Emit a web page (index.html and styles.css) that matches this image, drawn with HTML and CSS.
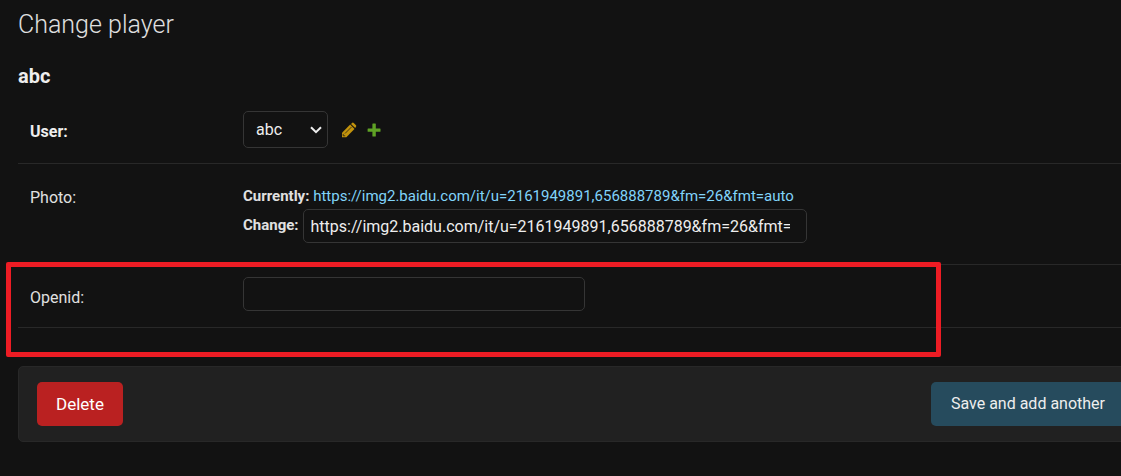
FILE: index.html
```html
<!DOCTYPE html>
<html lang="en">
<head>
<meta charset="utf-8">
<title>Change player</title>
<link rel="stylesheet" href="styles.css">
</head>
<body>
<main class="content">
  <h1 class="page-title">Change player</h1>
  <h2 class="object-name">abc</h2>
  <form>
    <div class="form-row">
      <label class="field-label required" for="user">User:</label>
      <div class="related">
        <div class="select-wrap">
          <select class="select" id="user"><option>abc</option></select>
          <svg class="chevron" width="12" height="8" viewBox="0 0 12 8" aria-hidden="true"><path d="M1 1.200 6 6.200 11 1.200" fill="none" stroke="#eee" stroke-width="2"/></svg>
        </div>
        <a class="related-link" href="#change" aria-label="Change selected user">
          <svg width="16" height="16" viewBox="0 0 16 16"><path d="M1 15.300V10.800L9.200 2.600 13.500 6.900 5.300 15.300Z" fill="#c2930c"/><path d="M10 1.900 11.300.8Q12 .3 12.700.9L15 3.300Q15.600 4 15 4.700L14.200 6.100Z" fill="#c2930c"/><path d="M4 11.500 10.600 4.900M2.200 11.900V13.800H4.200" fill="none" stroke="#121212" stroke-opacity=".7"/></svg>
        </a>
        <a class="related-link" href="#add" aria-label="Add another user">
          <svg width="16" height="16" viewBox="0 0 16 16"><path d="M6.900 1.600h2.400q.5 0 .5.500V6.400h4.200q.5 0 .5.500v2.400q0 .5-.5.500H9.800v4.200q0 .5-.5.500H6.900q-.5 0-.5-.5V9.800H2.100q-.5 0-.5-.5V6.900q0-.5.500-.5H6.400V2.100q0-.5.500-.5Z" fill="#5fa225"/></svg>
        </a>
      </div>
    </div>
    <div class="form-row photo-row">
      <label class="field-label" for="photo">Photo:</label>
      <div class="url-field">
        <div class="current"><b>Currently:</b> <a href="#photo">https://img2.baidu.com/it/u=2161949891,656888789&amp;fm=26&amp;fmt=auto</a></div>
        <div class="change"><label for="photo">Change:</label><input class="input url-input" id="photo" type="text" value="https://img2.baidu.com/it/u=2161949891,656888789&amp;fm=26&amp;fmt=auto"></div>
      </div>
    </div>
    <div class="form-row marked">
      <label class="field-label" for="openid">Openid:</label>
      <input class="input openid-input" id="openid" type="text">
    </div>
    <div class="submit-row">
      <button class="button delete" type="button">Delete</button>
      <button class="button save" type="button">Save and add another</button>
    </div>
  </form>
</main>
</body>
</html>
```
FILE: styles.css
```css
* {
  box-sizing: border-box;
}

html {
  background: #121212;
  overflow-x: hidden;
}

body {
  margin: 0;
  color: #eee;
  font: 16px/20px Roboto, sans-serif;
  overflow-x: hidden;
}

.content {
  padding: 9px 0 34px 18px;
}

.page-title {
  margin: 0 0 22px;
  color: #e0e0e0;
  font-size: 25px;
  font-weight: 300;
  line-height: 32px;
}

.object-name {
  margin: 0 0 10px;
  font-size: 20px;
  font-weight: 700;
  line-height: 26px;
}

.form-row {
  display: flex;
  align-items: flex-start;
  padding: 12px 0 15px 12px;
  border-bottom: 1px solid #282828;
}

.photo-row {
  padding-top: 22px;
  padding-bottom: 21px;
}

.field-label {
  flex: none;
  width: 213px;
  padding-top: 11px;
  color: #e0e0e0;
}

.photo-row .field-label {
  padding-top: 2px;
}

.form-row .required {
  color: #eee;
  font-weight: 700;
}

.related {
  display: flex;
  align-items: center;
}

.select-wrap {
  position: relative;
  margin-right: 13px;
}

.select {
  display: block;
  width: 85px;
  height: 37px;
  padding: 0 12px;
  border: 1px solid #353535;
  border-radius: 5px;
  background: #121212;
  color: #eee;
  font: inherit;
  appearance: none;
}

.chevron {
  position: absolute;
  top: 15px;
  right: 6px;
  pointer-events: none;
}

.related-link {
  display: flex;
  margin-right: 9px;
}

.url-field {
  color: #e0e0e0;
  font-size: 15px;
}

.current {
  line-height: 20px;
  margin-bottom: 3px;
}

.current a {
  color: #81d4fa;
  text-decoration: none;
}

.change {
  display: flex;
  align-items: flex-start;
  gap: 4px;
  font-weight: 700;
}

.change label {
  padding-top: 6px;
}

.input {
  height: 34px;
  padding: 0 7px;
  border: 1px solid #353535;
  border-radius: 5px;
  background: #121212;
  color: #eee;
  font: 16px/20px Roboto, sans-serif;
}

.url-input {
  width: 504px;
  padding-right: 16px;
}

.openid-input {
  width: 342px;
}

.marked {
  position: relative;
  padding-bottom: 16px;
}

/* Highlight frame around the field */
.marked::after {
  content: "";
  position: absolute;
  top: -3px;
  right: 180px;
  bottom: -30px;
  left: -12px;
  border: 5px solid #ed1c24;
  border-radius: 2px;
  pointer-events: none;
}

.submit-row {
  display: flex;
  justify-content: space-between;
  margin: 38px -24px 0 0;
  padding: 15px 19px 15px 18px;
  border: 1px solid #282828;
  border-radius: 5px;
  background: #212121;
}

.button {
  height: 44px;
  padding: 0 20px;
  border: 0;
  border-radius: 5px;
  color: #eee;
  font: 16px/20px Roboto, sans-serif;
}

.delete {
  padding: 0 19px;
  background: #ba2121;
  color: #fff;
  font-size: 17px;
}

.save {
  background: #264b5d;
}
```
